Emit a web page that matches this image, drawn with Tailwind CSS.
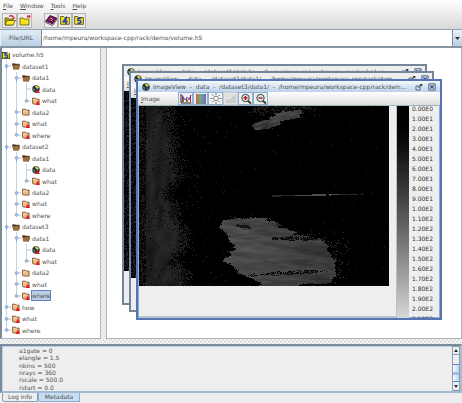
<!DOCTYPE html>
<html lang="en">
<head>
<meta charset="utf-8">
<title>volume.h5</title>
<script src="https://cdn.jsdelivr.net/npm/@tailwindcss/browser@4"></script>
</head>
<body class="flex h-screen flex-col overflow-hidden bg-[#eeeeee] font-['DejaVu_Sans',sans-serif] text-[6px] leading-[8px] text-[#505050]">
<svg class="hidden">
  <symbol id="h5" viewBox="0 0 8 8"><path d="M0 1h3l1 1h4v6H0z" fill="#2a2a10"/><path d="M.7 1.8h6.6v5.5H.7z" fill="#f2e600"/><path d="M5.6 2H3v2.2h1.8q.9 0 .9 1T4.600 6.500H2.600" fill="none" stroke="#1838c8" stroke-width="1.300"/></symbol>
  <symbol id="open" viewBox="0 0 8 8"><path d="M0 1.500h3l.8.8h4v2L7 7.500H1.400z" fill="#5d3a1c"/><path d="M.4 3.200h7.400L6.600 7H1.600z" fill="#a0703c"/><path d="M.8 2.200h6.400" stroke="#3c2410" stroke-width=".7"/></symbol>
  <symbol id="closed" viewBox="0 0 8 8"><path d="M.4 1.200h3l.8.9h2.900v5H1.300L.4 6z" fill="#efb883" stroke="#6b4424" stroke-width=".8"/><path d="M1.300 3h4" stroke="#ffe2c0" stroke-width=".8"/></symbol>
  <symbol id="attr" viewBox="0 0 8 8"><use href="#closed"/><path d="M5.600 3.600L8 8H3.800z" fill="#f01818"/></symbol>
  <symbol id="globe" viewBox="0 0 8 8"><circle cx="4" cy="4" r="3.700" fill="#222c40"/><path d="M3 .8q3-.6 4 2L5 4 3.500 2.500z" fill="#d8d040"/><path d="M.8 3l2 1 .8 3Q1 6.500.8 3z" fill="#4a8a4a"/><path d="M4.500 4.500l2 .4-1.500 2z" fill="#4565b8"/></symbol>
  <symbol id="data" viewBox="0 0 8 8"><use href="#globe"/><path d="M5.600 4L8 8H3.800z" fill="#f01818"/></symbol>
  <symbol id="restore" viewBox="0 0 8 8"><path d="M1 3h4v4H1z" fill="#dce6f2" stroke="#4a5a74" stroke-width=".9"/><path d="M3 5l3.500-3.500" fill="none" stroke="#333" stroke-width=".8"/><path d="M4.500 1H7.300v2.800z" fill="#333"/></symbol>
  <symbol id="close" viewBox="0 0 8 8"><path d="M.8.8h6.400v6.400H.8z" fill="#c8d8ee" stroke="#4a5e84" stroke-width=".9"/><path d="M2.300 2.300l3.400 3.400M5.700 2.300L2.300 5.700" stroke="#364a70" stroke-width="1.100"/></symbol>
  <symbol id="lens" viewBox="0 0 12 12"><path d="M7.500 7.500L11 10.500" stroke="#3b3a12" stroke-width="1.800"/><circle cx="5.500" cy="5" r="3.700" fill="#c6f0f0" stroke="#333" stroke-width=".9"/></symbol>
</svg>

<header class="shrink-0 bg-linear-to-b from-white to-[#d8d8d8]">
  <nav class="flex h-[11px] items-center gap-[7px] pl-[3px]" aria-label="Main menu">
    <button><u>F</u>ile</button><button><u>W</u>indow</button><button><u>T</u>ools</button><button><u>H</u>elp</button>
  </nav>
  <div class="flex h-[18px] items-center pl-[2px]">
    <button aria-label="Open" class="flex h-[15px] w-[15px] items-center justify-center border border-[#b4b4b4] bg-[#ececec]">
      <svg class="h-[12px] w-[12px]" viewBox="0 0 12 12"><path d="M1 4h3l1 1h4v6H1z" fill="#b8a800" stroke="#4a4400" stroke-width=".7"/><path d="M3 6.500h8.500L9 11H1z" fill="#ffe92a" stroke="#4a4400" stroke-width=".7"/><path d="M5 2.500Q8 .5 9.500 3.500" fill="none" stroke="#e02020" stroke-width="1.300"/><path d="M7.800 3.500h3.700L9.800 5.500z" fill="#e02020"/></svg>
    </button>
    <button aria-label="Close file" class="flex h-[15px] w-[15px] items-center justify-center border border-[#b4b4b4] bg-[#ececec]">
      <svg class="h-[12px] w-[12px]" viewBox="0 0 12 12"><path d="M1 4h3l1 1h5v6H1z" fill="#f5e21c" stroke="#5a5200" stroke-width=".8"/><path d="M8.500 1l2.500 3M11 1L8.500 4M8 2.500h3.500" stroke="#e02020" stroke-width=".9"/></svg>
    </button>
    <button aria-label="Guide" class="ml-[12px] flex h-[15px] w-[14px] items-center justify-center border border-[#b4b4b4] bg-[#ececec]">
      <svg class="h-[12px] w-[12px]" viewBox="0 0 12 12"><path d="M.8 7L5 1.500 11.500 4 7.500 10z" fill="#6e1466" stroke="#38062f" stroke-width=".8"/><path d="M.8 7v1.500l6.700 3L11.500 6V4l-4 6z" fill="#e8dcc8" stroke="#38062f" stroke-width=".7"/><path d="M4.500 5.500q1-2 2.500-1T6.200 6.800" stroke="#ffb840" fill="none"/></svg>
    </button>
    <button aria-label="HDF4" class="flex h-[15px] w-[14px] items-center justify-center border border-[#b4b4b4] bg-[#ececec]">
      <svg class="h-[10px] w-[10px]" viewBox="0 0 10 10"><path d="M.6 1.500h3l1 1h4.800v6.800H.6z" fill="#f5e21c" stroke="#4a4400" stroke-width=".8"/><path d="M6 9V3L3.200 6.800h4.300" fill="none" stroke="#1838c8" stroke-width="1.400"/></svg>
    </button>
    <button aria-label="HDF5" class="flex h-[15px] w-[14px] items-center justify-center border border-[#b4b4b4] bg-[#ececec]">
      <svg class="h-[10px] w-[10px]" viewBox="0 0 10 10"><path d="M.6 1.500h3l1 1h4.800v6.800H.6z" fill="#f5e21c" stroke="#4a4400" stroke-width=".8"/><path d="M7 3.200H4v2.300h1.800q1.200 0 1.200 1.300T5.600 8.200H3.500" fill="none" stroke="#1838c8" stroke-width="1.400"/></svg>
    </button>
  </div>
</header>

<div class="flex h-[19px] shrink-0 border-t border-b-2 border-t-[#8fa3b8] border-b-[#8795a3] pl-px">
  <button class="w-[41px] border-r border-[#7a8a99] bg-linear-to-b from-[#e4edf6] to-[#b8cfe5]">File/URL</button>
  <input aria-label="File/URL" class="min-w-0 flex-1 bg-white pl-[1px] outline-none" value="/home/mpeura/workspace-cpp/rack/demo/volume.h5">
  <button aria-label="Recent files" class="flex w-[10px] items-center justify-center border-l border-[#7a8a99] bg-linear-to-b from-[#eaf1f8] to-[#b8cfe5]"><svg class="h-[3px] w-[5px]" viewBox="0 0 5 3"><path d="M0 0h5L2.500 3z" fill="#333"/></svg></button>
</div>

<main class="flex min-h-0 flex-1">
  <aside class="w-[101px] shrink-0 border-r border-b border-l-2 border-r-[#a8b4c0] border-b-[#a8b4c0] border-l-[#7a8a99] bg-white pt-[1px] pb-[2px]">
    <ul id="tree" class="grid h-full auto-rows-fr" role="tree" aria-label="volume.h5"></ul>
  </aside>
  <div class="w-[5px] shrink-0 bg-[repeating-conic-gradient(#e2e2e2_0_25%,#f4f4f4_0_50%)] bg-size-[4px_4px]"></div>
  <section class="relative min-w-0 flex-1 overflow-hidden border-x border-b border-[#a8b4c0] bg-white" aria-label="Desktop">

    <article class="absolute top-[16px] left-[15px] h-[241px] w-[305px] border-2 border-[#74869a] bg-[#eeeeee]">
      <div class="flex h-[11px] items-center gap-[3px] px-[3px]"><svg class="h-[8px] w-[8px] shrink-0"><use href="#globe"/></svg><h2 class="min-w-0 flex-1 truncate pr-[3px] whitespace-pre">ImageView  -  data  -  /dataset1/data1/  -  /home/mpeura/workspace-cpp/rack/demo/volume.h5</h2><svg class="h-[8px] w-[8px] shrink-0"><use href="#restore"/></svg><svg class="ml-[2px] h-[8px] w-[8px] shrink-0"><use href="#close"/></svg></div>
      <div class="flex h-[14px] items-center bg-linear-to-b from-white to-[#dddddd] pl-[3px]"><u>I</u>mage</div>
      <canvas class="radar h-[180px] w-[250px]" width="250" height="180"></canvas>
    </article>

    <article class="absolute top-[23px] left-[22px] h-[241px] w-[305px] border-2 border-[#74869a] bg-[#eeeeee]">
      <div class="flex h-[11px] items-center gap-[3px] px-[3px]"><svg class="h-[8px] w-[8px] shrink-0"><use href="#globe"/></svg><h2 class="min-w-0 flex-1 truncate pr-[3px] whitespace-pre">ImageView  -  data  -  /dataset2/data1/  -  /home/mpeura/workspace-cpp/rack/demo/volume.h5</h2><svg class="h-[8px] w-[8px] shrink-0"><use href="#restore"/></svg><svg class="ml-[2px] h-[8px] w-[8px] shrink-0"><use href="#close"/></svg></div>
      <div class="flex h-[14px] items-center bg-linear-to-b from-white to-[#dddddd] pl-[3px]"><u>I</u>mage</div>
      <canvas class="radar h-[180px] w-[250px]" width="250" height="180"></canvas>
    </article>

    <article class="absolute top-[31px] left-[29px] flex h-[241px] w-[306px] flex-col border-2 border-[#5575b5] bg-[#eeeeee] ring-1 ring-[#8fa8d4] ring-inset">
      <div class="flex h-[11px] shrink-0 items-center gap-[3px] bg-linear-to-b from-[#f4f8fc] to-[#bcd2ea] px-[4px]"><svg class="h-[8px] w-[8px] shrink-0"><use href="#globe"/></svg><h2 class="mr-[4px] min-w-0 flex-1 truncate whitespace-pre">ImageView  -  data  -  /dataset3/data1/  -  /home/mpeura/workspace-cpp/rack/demo/volume.h5</h2>
        <button aria-label="Restore"><svg class="h-[8px] w-[8px]"><use href="#restore"/></svg></button><button aria-label="Close" class="ml-[2px]"><svg class="h-[8px] w-[8px]"><use href="#close"/></svg></button></div>
      <div class="flex h-[14px] shrink-0 items-center border-b border-[#9fb4bc] bg-linear-to-b from-white to-[#dddddd] pl-[3px]">
        <button class="w-[37px] text-left"><u>I</u>mage</button>
        <button aria-label="Histogram" class="flex h-[13px] w-[15px] items-center justify-center border border-[#8fb0d0] bg-[#eeeeee]"><svg class="h-[11px] w-[12px]" viewBox="0 0 12 11"><path d="M1 1v9h10.500" stroke="#222" fill="none"/><path d="M2.500 9V3M6.500 9V5M10.500 9V2" stroke="#e02020"/><path d="M3.500 9V5M7.500 9V7" stroke="#20a040"/><path d="M2 2l3 5 2.500-3L9 7l2-5" stroke="#3030b8" fill="none" stroke-width=".8"/></svg></button>
        <button aria-label="Palette" class="flex h-[13px] w-[15px] items-center justify-center border border-[#8fb0d0] bg-[#eeeeee]"><span class="h-[10px] w-[10px] bg-linear-to-r from-[#e04040] via-[#40c080] to-[#8040e0]"><span class="block h-full bg-linear-to-b from-transparent to-[#808080]/60"></span></span></button>
        <button aria-label="Brightness" class="flex h-[13px] w-[15px] items-center justify-center border border-[#8fb0d0] bg-[#f6f6f6]"><svg class="h-[11px] w-[12px]" viewBox="0 0 12 11"><circle cx="6" cy="5.500" r="2.300" fill="#fff" stroke="#555" stroke-width=".8"/><path d="M6 0v2M6 9v2M.5 5.500h2M9.500 5.500h2M2 1.500l1.500 1.500M8.500 8l1.500 1.500M10 1.500L8.500 3M3.500 8L2 9.500" stroke="#555" stroke-width=".8"/></svg></button>
        <button aria-label="Contour" class="flex h-[13px] w-[15px] items-center justify-center border border-[#cccccc] bg-[#e2e2e2]"><svg class="h-[11px] w-[12px]" viewBox="0 0 12 11"><path d="M1 10V7l2-1 2 1 3-4 3-2v9z" fill="#cacaca"/><path d="M2 3h3M6 8h3" stroke="#d6d6d6"/></svg></button>
        <button aria-label="Zoom in" class="flex h-[13px] w-[15px] items-center justify-center border border-[#8fb0d0] bg-[#eeeeee]"><svg class="h-[12px] w-[12px]" viewBox="0 0 12 12"><use href="#lens"/><path d="M3.500 5h4M5.500 3v4" stroke="#e01010" stroke-width="1.500"/></svg></button>
        <button aria-label="Zoom out" class="flex h-[13px] w-[15px] items-center justify-center border border-[#8fb0d0] bg-[#eeeeee]"><svg class="h-[12px] w-[12px]" viewBox="0 0 12 12"><use href="#lens"/><path d="M3.500 5h4" stroke="#e01010" stroke-width="1.500"/></svg></button>
      </div>
      <div class="flex min-h-0 flex-1 overflow-hidden pl-px">
        <div class="flex-1 border-r border-b-2 border-[#b4c2ce]"><canvas class="radar h-[180px] w-[250px]" width="250" height="180"></canvas></div>
        <div class="flex w-[43px] gap-[3px]">
          <div class="w-[12px] bg-linear-to-b from-black to-[#d8d8d8]"></div>
          <ol class="-mt-[2px] leading-[10px] text-[#333333]">
            <li>0.00E0</li><li>1.00E1</li><li>2.00E1</li><li>3.00E1</li><li>4.00E1</li><li>5.00E1</li><li>6.00E1</li><li>7.00E1</li><li>8.00E1</li><li>9.00E1</li><li>1.00E2</li><li>1.10E2</li><li>1.20E2</li><li>1.30E2</li><li>1.40E2</li><li>1.50E2</li><li>1.60E2</li><li>1.70E2</li><li>1.80E2</li><li>1.90E2</li><li>2.00E2</li><li>2.10E2</li>
          </ol>
        </div>
      </div>
    </article>
  </section>
</main>

<div class="h-[5px] shrink-0 bg-[repeating-conic-gradient(#e2e2e2_0_25%,#f4f4f4_0_50%)] bg-size-[4px_4px]"></div>

<footer class="shrink-0">
  <div class="flex h-[49px] border-2 border-t-[#7a8a99] border-r-[#a8bcd0] border-b-[#a3b8d4] border-l-[#7a8a99]">
    <div class="grid flex-1 auto-rows-fr border-t border-l border-[#b8cfe5] pl-[16px]">
      <p>a1gate = 0</p><p>elangle = 1.5</p><p>nbins = 500</p><p>nrays = 360</p><p>rscale = 500.0</p><p>rstart = 0.0</p>
    </div>
    <div class="flex w-[8px] flex-col border border-[#8a9eb4]">
      <button aria-label="Scroll up" class="flex h-[8px] items-center justify-center border-b border-[#8a9eb4]"><svg class="h-[3px] w-[4px]" viewBox="0 0 4 3"><path d="M2 0l2 3H0z" fill="#333"/></svg></button>
      <div class="flex-1"></div>
      <div class="flex h-[18px] items-center border-y border-[#6382bf] bg-linear-to-r from-white to-[#b8d0ea]"><span class="h-[3px] w-full bg-[#a9b9e2]"></span></div>
      <button aria-label="Scroll down" class="flex h-[8px] items-center justify-center"><svg class="h-[3px] w-[4px]" viewBox="0 0 4 3"><path d="M0 0h4L2 3z" fill="#333"/></svg></button>
    </div>
  </div>
  <div class="flex h-[10px] pb-px pl-[2px]" role="tablist">
    <button role="tab" class="w-[36px] rounded-bl-[3px] border border-t-0 border-[#8a9eb4]">Log info</button>
    <button role="tab" aria-selected="true" class="w-[42px] rounded-bl-[3px] border border-t-0 border-[#8fabd0] bg-[#c8ddf2]">Metadata</button>
  </div>
</footer>

<script>
// depth, icon, label, handle: o = expanded, c = collapsed, - = leaf
const group = n => [[1,'open','dataset'+n,'o'],[2,'open','data1','o'],[3,'data','data','-'],[3,'attr','what','c'],[2,'closed','data2','c'],[2,'attr','what','c'],[2,'attr','where','c']];
const rows = [[0,'h5','volume.h5',''],...group(1),...group(2),...group(3),[1,'attr','how','c'],[1,'attr','what','c'],[1,'attr','where','c']];
const continues = (i, level) => { for (let k = i+1; k < rows.length; k++) { if (rows[k][0] < level) return false; if (rows[k][0] === level) return true; } return false; };
document.getElementById('tree').innerHTML = rows.map(([d, icon, label, h], i) => {
  let cells = '';
  for (let l = 1; l <= d; l++) {
    const more = continues(i, l);
    let g = '';
    if (l === d) {
      g = `<path d="M4.500 0V${more ? 12 : 6}" stroke="#c4d5e6"/><path d="M4.500 6H9" stroke="#b4c8e0"/>`;
      if (h === 'o') g += '<path d="M4.500 6V9.500" stroke="#8aa5cc"/>';
      if (h !== '-') g += '<circle cx="4.500" cy="6" r="1.400" fill="#a9c0e0" stroke="#86a2ca" stroke-width=".8"/>';
    } else if (more) g = '<path d="M4.500 0V12" stroke="#c4d5e6"/>';
    cells += `<svg class="h-[12px] w-[10px] shrink-0" viewBox="0 0 10 12">${g}</svg>`;
  }
  const chosen = i === 21;
  return `<li role="treeitem" class="flex items-center">${cells}<svg class="mr-[1px] h-[8px] w-[8px] shrink-0"><use href="#${icon}"/></svg><span class="${chosen ? 'border border-[#6382bf] bg-[#b8cfe5] leading-[9px]' : 'border border-transparent leading-[9px]'}">${label}</span></li>`;
}).join('');

// Radar sweep: noise-modulated echoes over black
const W = 250, H = 180;
const hash = (x, y) => { let n = Math.imul(x, 374761393) ^ Math.imul(y, 668265263); n = Math.imul(n ^ (n >>> 13), 1274126177); return ((n ^ (n >>> 16)) >>> 0) / 4294967296; };
const noise = (x, y) => { const a = Math.floor(x), b = Math.floor(y), u = x-a, v = y-b; return (hash(a,b)*(1-u)+hash(a+1,b)*u)*(1-v)+(hash(a,b+1)*(1-u)+hash(a+1,b+1)*u)*v; };
const mask = (pts, blur) => {
  const c = document.createElement('canvas'); c.width = W; c.height = H;
  const g = c.getContext('2d'); g.filter = `blur(${blur}px)`;
  g.beginPath(); pts.forEach(p => g.lineTo(p[0], p[1])); g.closePath(); g.fill();
  return g.getImageData(0, 0, W, H).data;
};
const big = mask([[77,119],[90,110],[104,113],[124,111],[135,117],[152,124],[162,131],[178,131],[188,138],[190,148],[199,160],[194,173],[182,178],[160,179],[150,190],[128,184],[116,174],[98,164],[90,159],[74,155],[88,150],[98,144],[90,133],[86,124]], 4);
const top1 = mask([[112,17],[125,14],[138,8],[155,3],[167,4],[158,12],[145,16],[130,23],[118,26],[112,22]], 3);
const top2 = mask([[112,-6],[186,-6],[178,4],[150,8],[125,7],[112,4]], 3);
const img = new ImageData(W, H);
for (let y = 0; y < H; y++) for (let x = 0; x < W; x++) {
  const i = (y*W+x)*4, r = hash(x+7, y+91), a = big[i+3]/255, b = top1[i+3]/255, t = top2[i+3]/255;
  let v = 0;
  const edge = 28 + 16*noise(3, y/14) + (y > 95 ? 7 : 0);
  const dens = x < 7 ? .4 : Math.min(.95, (edge - x)/20 + .3);
  if (r < dens) v = 18 + 22*noise(x/5 + y/60, y/13) + 5*r;
  else if (x < 90 && r > .97 && r < .97 + .03*(90-x)/50) v = 34;
  if (r > .998) v = 38;
  // wispy outline and horizontal streaks of the main echo
  const streak = .6*noise(x/26, (y + x*-.14)/3) + .4*noise(x/9, y/1.3);
  const edgeN = .6*noise(x/9, y/2.200) + .18*r;
  if (a > .1 + edgeN) v = 42 + 44*streak + 6*(r-.5) + (x < 140 ? 10*(140-x)/50 : -6*(x-140)/50);
  if (a > .5 && x > 105 && x < 188 && Math.abs(y - 167 + (x-140)*.06) < 3*noise(x/6, 2) && r > .45) v = 8;
  if (a > .5 && x > 132 && Math.abs(y - 132) < 2.500*noise(x/5, 9) && r > .3) v = 10;
  if (Math.abs(x-105)/9 + Math.abs(y-120-(x-105)*.15)/2.500 < .5 + noise(x/3, y)) { if (a > .4) v = 22; }
  if (x > 155 && x < 212 && y > 122 && r < .3*Math.exp(-Math.pow((y-155)/20,2))*(1-(x-185)/27) && a < .4) v = 48;
  if (b > .15 + edgeN) v = 44 + 36*noise(x/9, (y+x*.35)/1.700);
  else if (r < t*.55) v = 34;
  const ly = 89.500 - (x-132)*.02;
  if (x > 132 && x < 224 && Math.abs(y-ly) < .7 && noise(x/4, 5) > .35) v = x > 155 && x < 200 ? 78 : 40;
  img.data[i] = img.data[i+1] = img.data[i+2] = v; img.data[i+3] = 255;
}
document.querySelectorAll('.radar').forEach(c => c.getContext('2d').putImageData(img, 0, 0));
</script>
</body>
</html>
